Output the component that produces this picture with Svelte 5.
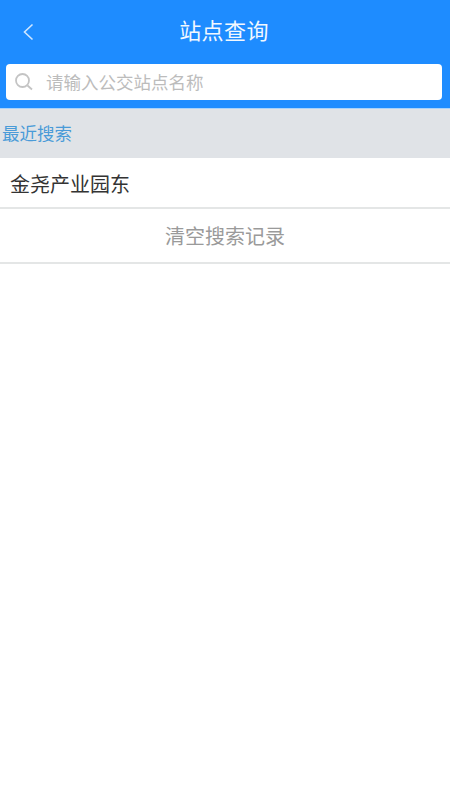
<script>
  const title = '站点查询';
</script>

<div class="page">
  <header class="top">
    <div class="nav">
      <svg class="back" width="12" height="18" viewBox="0 0 12 18" fill="none" aria-hidden="true">
        <path d="M10.5 1.5 L2.5 9 L10.5 16.5" stroke="#cfe6ff" stroke-width="1.6" />
      </svg>
      <div class="title">{title}</div>
    </div>
    <div class="search">
      <svg class="mag" width="20" height="20" viewBox="0 0 20 20" fill="none" aria-hidden="true">
        <circle cx="8.5" cy="8.5" r="6.5" stroke="#c4c4c4" stroke-width="1.8" />
        <path d="M13.5 13.5 L18 17.5" stroke="#c4c4c4" stroke-width="1.8" />
      </svg>
      <span class="ph">请输入公交站点名称</span>
    </div>
  </header>
  <div class="section">最近搜索</div>
  <div class="row item">金尧产业园东</div>
  <div class="row clear">清空搜索记录</div>
</div>

<style>
  :global(body) {
    margin: 0;
    background: #fff;
  }
  .page {
    width: 450px;
    height: 800px;
    background: #fff;
    font-family: "Noto Sans CJK SC", "Liberation Sans", sans-serif;
    display: flex;
    flex-direction: column;
  }
  .top {
    background: #1e8cff;
    height: 109px;
    flex: none;
    box-sizing: border-box;
    border-bottom: 1px solid #a9d3fb;
    padding: 0 8px 0 6px;
    display: flex;
    flex-direction: column;
  }
  .nav {
    height: 64px;
    flex: none;
    display: flex;
    align-items: center;
    justify-content: center;
    position: relative;
  }
  .back {
    position: absolute;
    left: 16px;
    top: 23px;
  }
  .title {
    color: #f2f8ff;
    font-size: 22px;
    letter-spacing: 0.4px;
    line-height: 30px;
    margin-top: -7px;
  }
  .search {
    height: 36px;
    background: #fff;
    border-radius: 4px;
    display: flex;
    align-items: center;
    padding-left: 8px;
  }
  .mag {
    flex: none;
  }
  .ph {
    margin-left: 12px;
    color: #bcbcbc;
    font-size: 17.5px;
    line-height: 24px;
  }
  .section {
    height: 49px;
    flex: none;
    background: #e0e3e7;
    color: #4a9bd8;
    font-size: 17.5px;
    line-height: 48px;
    padding-left: 2px;
  }
  .row {
    box-sizing: border-box;
    flex: none;
    border-bottom: 2px solid #e4e6e6;
  }
  .item {
    height: 51px;
    color: #333;
    font-size: 20px;
    line-height: 52px;
    padding-left: 10px;
  }
  .clear {
    height: 55px;
    color: #9a9a9a;
    font-size: 20px;
    line-height: 53px;
    text-align: center;
  }
</style>
